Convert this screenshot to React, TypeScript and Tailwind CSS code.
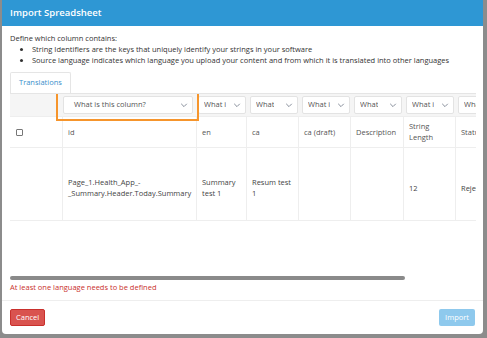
import React from 'react';

const COLUMNS = [
  { key: 'check', label: '', width: 'w-[52px]' },
  { key: 'id', label: 'id', width: 'w-[134px]' },
  { key: 'en', label: 'en', width: 'w-[50px]' },
  { key: 'ca', label: 'ca', width: 'w-[52px]' },
  { key: 'cadraft', label: 'ca (draft)', width: 'w-[52px]' },
  { key: 'desc', label: 'Description', width: 'w-[53px]' },
  { key: 'len', label: 'String Length', width: 'w-[52px]' },
  { key: 'status', label: 'Status', width: 'w-[52px]' },
];

const ROW: Record<string, React.ReactNode> = {
  id: (
    <>
      Page_1.Health_App_-
      <br />
      _Summary.Header.Today.Summary
    </>
  ),
  en: (
    <>
      Summary
      <br />
      test 1
    </>
  ),
  ca: (
    <>
      Resum test
      <br />1
    </>
  ),
  cadraft: '',
  desc: '',
  len: '12',
  status: 'Rejected',
};

const SHORT_LABELS = ['What i', 'What', 'What i', 'What', 'What i', 'What'];

const Chevron = () => (
  <svg className="w-[8px] h-[8px] shrink-0 text-gray-500" viewBox="0 0 10 10" fill="none" stroke="currentColor">
    <path d="M1.5 3.5l3.5 3.5 3.5-3.5" strokeWidth="1" />
  </svg>
);

const App: React.FC = () => {
  return (
    <div className="w-[487px] h-[338px] bg-[#8c8c8c] overflow-hidden relative font-['Open_Sans',sans-serif]">
      {/* Modal */}
      <div className="ml-[2px] w-[481px] h-[334px] bg-white rounded-b-[4px] flex flex-col overflow-hidden">
        {/* Header */}
        <div className="h-[26px] bg-[#2e97d4] flex items-center px-[8px] shrink-0">
          <h1 className="text-white text-[9.5px] font-semibold">Import Spreadsheet</h1>
        </div>

        {/* Body */}
        <div className="px-[8px] pt-[7px] flex flex-col flex-1 min-h-0">
          <p className="text-[7.5px] leading-[11px] text-[#333]">Define which column contains:</p>
          <ul className="text-[7.5px] leading-[11px] text-[#333] pl-[22px] list-disc">
            <li>String Identifiers are the keys that uniquely identify your strings in your software</li>
            <li className="whitespace-nowrap">
              Source language indicates which language you upload your content and from which it is translated into other languages
            </li>
          </ul>

          {/* Tabs */}
          <div className="mt-[6px] flex">
            <div className="h-[21px] px-[8px] border border-b-0 border-[#e5e5e5] rounded-t-[2px] flex items-center text-[7.5px] text-[#3a8fcb]">
              Translations
            </div>
          </div>

          {/* Table */}
          <div className="w-[466px] overflow-hidden border-t border-[#e5e5e5] relative">
            {/* Select row */}
            <div className="flex h-[23px] bg-[#f5f5f5] border-b border-[#eee]">
              <div className="w-[52px] shrink-0" />
              <div className="w-[134px] shrink-0 flex items-center pl-[1px] pr-[3px]">
                <div className="w-full h-[18px] bg-white border border-[#e3e3e3] rounded-[2px] flex items-center justify-between pl-[10px] pr-[4px] text-[7.5px] text-[#555]">
                  What is this column?
                  <Chevron />
                </div>
              </div>
              {SHORT_LABELS.map((l, i) => (
                <div key={i} className="w-[52px] shrink-0 flex items-center px-[2px]">
                  <div className="w-full h-[18px] bg-white border border-[#e3e3e3] rounded-[2px] flex items-center justify-between pl-[5px] pr-[4px] text-[7.5px] text-[#555] overflow-hidden whitespace-nowrap">
                    <span className="overflow-hidden">{l}</span>
                    <Chevron />
                  </div>
                </div>
              ))}
            </div>

            {/* Header row */}
            <div className="flex h-[31px] border-b border-[#eee]">
              {COLUMNS.map((c, i) => (
                <div
                  key={c.key}
                  className={`${c.width} shrink-0 flex items-center px-[5px] text-[7.5px] leading-[11px] text-[#555] ${i > 0 ? 'border-l border-[#eee]' : ''}`}
                >
                  {c.key === 'check' ? (
                    <span className="ml-[1px] w-[7px] h-[7px] border border-[#777] rounded-[1px] bg-white" />
                  ) : (
                    c.label
                  )}
                </div>
              ))}
            </div>

            {/* Data row */}
            <div className="flex h-[73px] border-b border-[#eee]">
              {COLUMNS.map((c, i) => (
                <div
                  key={c.key}
                  className={`${c.width} shrink-0 flex items-center px-[5px] pt-[8px] text-[7.5px] leading-[11px] text-[#444] whitespace-nowrap overflow-hidden ${i > 0 ? 'border-l border-[#eee]' : ''}`}
                >
                  {c.key === 'check' ? null : ROW[c.key]}
                </div>
              ))}
            </div>

            {/* Orange highlight */}
            <div className="absolute left-[46px] top-[-5px] w-[143px] h-[32px] border-2 border-[#f6952c] pointer-events-none" />
          </div>

          {/* Scrollbar */}
          <div className="mt-auto">
            <div className="w-[395px] h-[4px] bg-[#8a8a8a] rounded-[2px]" />
            <p className="mt-[2px] text-[7.5px] leading-[11px] text-[#c9302c]">At least one language needs to be defined</p>
          </div>
          <div className="h-[7px]" />
        </div>

        {/* Footer */}
        <div className="h-[34px] border-t border-[#eee] flex items-center justify-between px-[8px] shrink-0">
          <button className="h-[17px] px-[5px] bg-[#d9534f] border border-[#c9302c] rounded-[2px] text-white text-[7.5px]">
            Cancel
          </button>
          <button className="h-[17px] px-[6px] bg-[#8ec9ed] rounded-[2px] text-white text-[7.5px]">Import</button>
        </div>
      </div>
    </div>
  );
};

export default App;
